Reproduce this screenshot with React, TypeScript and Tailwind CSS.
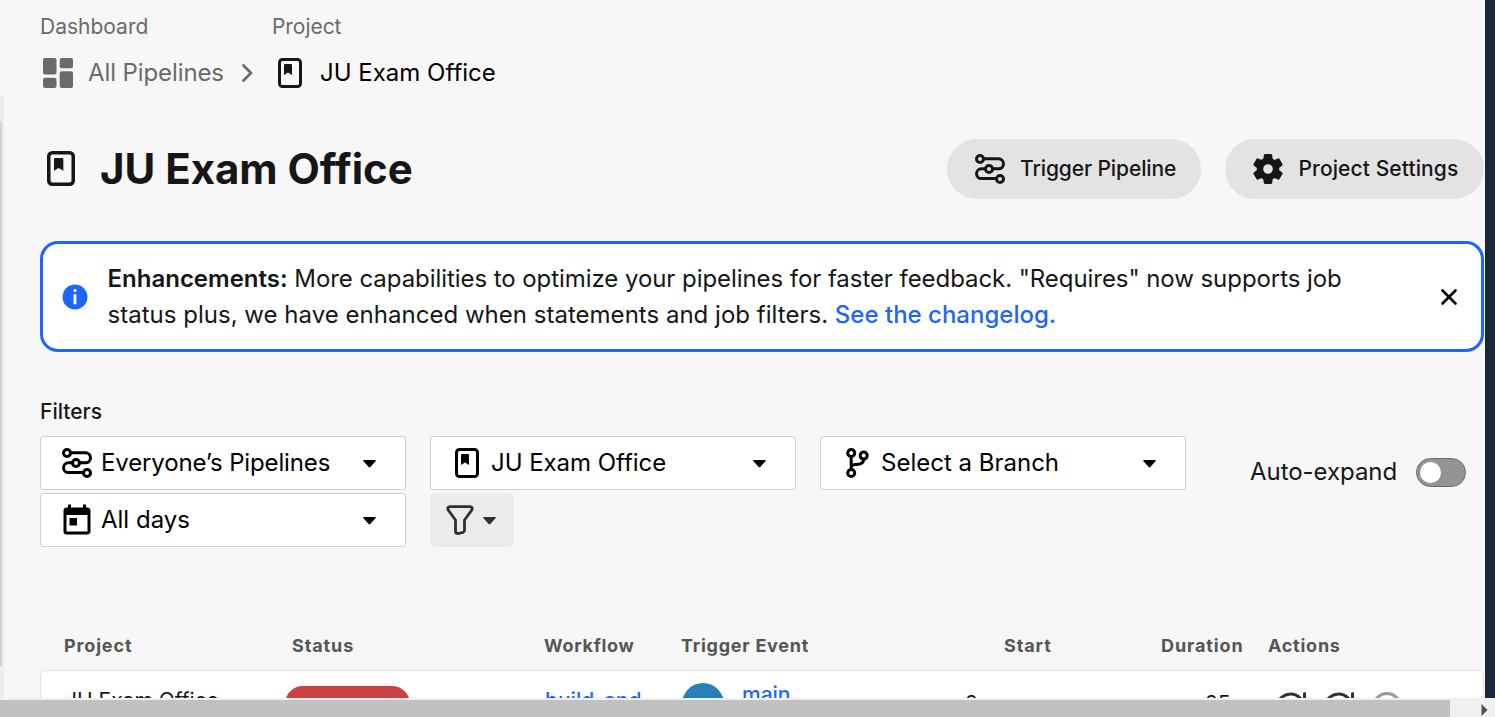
import type { ReactNode } from "react";
import { MdToday } from "react-icons/md";

function PipelineIcon() {
  return (
    <svg width="30" height="30" viewBox="0 0 30 30" fill="none" stroke="currentColor" strokeWidth="3" className="block shrink-0">
      <circle cx="5" cy="5" r="3.5" />
      <circle cx="14" cy="15" r="3.5" />
      <circle cx="25" cy="25" r="3.5" />
      <path d="M8.500 4.800H23.500a5 5 0 0 1 0 10H17.500" />
      <path d="M10.500 14.800H6.400a4.900 4.900 0 0 0 0 9.800H21.500" />
    </svg>
  );
}

const TEETH = [0, 60, 120, 180, 240, 300];

function GearIcon() {
  return (
    <svg width="30" height="30" viewBox="0 0 30 30" fill="currentColor" className="block shrink-0">
      <circle cx="15" cy="15" r="8" fill="none" stroke="currentColor" strokeWidth="6.400" />
      {TEETH.map((angle) => (
        <path key={angle} d="M10 7 10.900 1Q11.100 0 12.100 0H17.900Q18.900 0 19.100 1L20 7Z" transform={`rotate(${angle} 15 15)`} />
      ))}
    </svg>
  );
}

function ProjectIcon({ large = false }: { large?: boolean }) {
  return (
    <svg width={large ? 28 : 24} height={large ? 35 : 30} viewBox="0 0 24 30" fill="none" className="block shrink-0">
      <rect x="1.5" y="1.5" width="21" height="27" rx="3" stroke="currentColor" strokeWidth="3" />
      <path d="M7 6H13a1 1 0 0 1 1 1V17L10 14.6 6 17V7a1 1 0 0 1 1-1Z" fill="currentColor" />
    </svg>
  );
}

function DashboardIcon() {
  return (
    <svg width="30" height="30" viewBox="0 0 30 30" fill="currentColor" className="block shrink-0">
      <rect width="13.5" height="16.5" rx="2" />
      <rect y="19.8" width="13.5" height="10.2" rx="2" />
      <rect x="16.7" width="13.3" height="10.2" rx="2" />
      <rect x="16.7" y="13.2" width="13.3" height="16.8" rx="2" />
    </svg>
  );
}

function BranchIcon() {
  return (
    <svg width="23" height="30" viewBox="0 0 23 30" fill="none" stroke="currentColor" strokeWidth="3" className="block shrink-0">
      <circle cx="5.2" cy="5" r="3.5" />
      <circle cx="17.7" cy="7.6" r="3.5" />
      <circle cx="5.2" cy="25" r="3.5" />
      <path d="M5.2 8.6V21.4M17.7 11.2c0 4-4 5.2-7.500 5.200-2.500 0-4.500.8-5 2.500" />
    </svg>
  );
}

function Caret() {
  return (
    <svg width="13" height="8" viewBox="0 0 13 8" fill="currentColor" className="block shrink-0">
      <path d="M1 0H12Q13.300 .2 12.500 1.200L7.300 7Q6.500 7.800 5.700 7L.500 1.200Q-.300 .2 1 0Z" />
    </svg>
  );
}

function RerunIcon({ muted = false }: { muted?: boolean }) {
  return (
    <svg width="30" height="30" viewBox="0 0 30 30" fill="none" stroke="currentColor" strokeWidth="3" className="block shrink-0">
      {muted ? (
        <circle cx="15" cy="15" r="13.500" />
      ) : (
        <path strokeLinecap="round" d="M24.500 6.500A13.500 13.500 0 1 0 28 15M28.500 1.500V9H20" />
      )}
    </svg>
  );
}

function Select({ icon, children }: { icon: ReactNode; children: ReactNode }) {
  return (
    <button className="flex h-[54px] w-[366px] items-center rounded-[3px] border border-[#d0d0d0] bg-white pl-[18px] pr-[29.5px] text-left text-black">
      <span className="flex w-[36px] justify-center">{icon}</span>
      <span className="ml-[6px] flex-1 text-[24px] leading-[36px]">{children}</span>
      <span className="pt-[2px]"><Caret /></span>
    </button>
  );
}

export default function App() {
  return (
    <div className="flex h-[717px] w-[1495px] flex-col overflow-hidden bg-[#f7f7f7] font-['Inter',sans-serif] text-[#161616]">
      <div className="flex h-[698px] overflow-hidden">
        <div className="w-[4px] shrink-0 pt-[96px]">
          <div className="h-full bg-[#ededed] pt-[25px]">
            <div className="h-[545px] w-[2px] bg-[#d3d3d3]" />
          </div>
        </div>

        <main className="w-[1481px] shrink-0 pl-[36px]">
          <nav className="flex h-[139px] pt-[12px] text-[#6a6a6a]">
            <div className="w-[232px]">
              <div className="text-[21px] leading-[30px]">Dashboard</div>
              <div className="mt-[13px] flex h-[36px] items-center pl-[3px]">
                <DashboardIcon />
                <span className="ml-[15px] w-[154px] text-[24px] leading-[36px] tracking-[-0.1px]">All Pipelines</span>
                <svg width="11" height="18" viewBox="0 0 11 18" fill="none" stroke="currentColor" strokeWidth="2.800" strokeLinecap="round" strokeLinejoin="round">
                  <path d="M1.500 1.500 9 9 1.500 16.500" />
                </svg>
              </div>
            </div>
            <div>
              <div className="text-[21px] leading-[30px] tracking-[-0.05px]">Project</div>
              <div className="mt-[13px] flex h-[36px] items-center pl-[6px] text-[#161616]">
                <ProjectIcon />
                <span className="ml-[18px] text-[24px] leading-[36px] text-black">JU Exam Office</span>
              </div>
            </div>
          </nav>

          <header className="flex h-[60px] w-[1444px] items-center">
            <div className="pb-px pl-[7px]"><ProjectIcon large /></div>
            <h1 className="ml-[25px] flex-1 text-[42px] font-bold leading-[48px] tracking-[-0.03px]">JU Exam Office</h1>
            <button className="flex h-[60px] w-[254px] items-center rounded-full bg-[#e3e3e3] pl-[28px] text-[21px] font-medium tracking-[-0.1px]">
              <PipelineIcon />
              <span className="ml-[15px]">Trigger Pipeline</span>
            </button>
            <button className="ml-[24px] flex h-[60px] w-[259px] items-center rounded-full bg-[#e3e3e3] pl-[28px] text-[21px] font-medium tracking-[0.1px]">
              <GearIcon />
              <span className="ml-[15.5px]">Project Settings</span>
            </button>
          </header>

          <section className="mt-[42px] flex h-[111px] w-[1444px] items-center rounded-[18px] border-[3px] border-[#1c66fb] bg-white pl-[19px]">
            <svg width="26" height="26" viewBox="0 0 26 26" className="shrink-0">
              <circle cx="13" cy="13" r="12.500" fill="#1c66fb" />
              <circle cx="13" cy="6.500" r="1.500" fill="white" />
              <rect x="11.600" y="10" width="2.800" height="10.500" rx="1.300" fill="white" />
            </svg>
            <p className="ml-[19.5px] w-[1332.5px] text-[24px] leading-[36px]">
              <span className="tracking-[-0.062px]">
                <b className="font-semibold tracking-normal">Enhancements:</b> More capabilities to optimize your pipelines for faster feedback. "Requires" now supports job
              </span>
              <br />
              <span className="tracking-[0.02px]">status plus, we have enhanced when statements and job filters. </span>
              <a className="font-medium text-[#1c66fb]">See the changelog.</a>
            </p>
            <svg width="18" height="18" viewBox="0 0 18 18" fill="none" stroke="black" strokeWidth="2.600" strokeLinecap="round">
              <path d="M2.500 2.500 15.500 15.500M15.500 2.500 2.500 15.500" />
            </svg>
          </section>

          <section className="mt-[45px] h-[223px]">
            <h2 className="text-[21px] font-medium leading-[30px]">Filters</h2>
            <div className="mt-[9px] flex">
              <div className="flex w-[1210px] flex-wrap gap-x-[24px] gap-y-[3px]">
                <Select icon={<PipelineIcon />}><span className="tracking-[-0.14px]">Everyone’s Pipelines</span></Select>
                <Select icon={<ProjectIcon />}><span className="tracking-[-0.05px]">JU Exam Office</span></Select>
                <Select icon={<BranchIcon />}>Select a Branch</Select>
                <Select icon={<span className="pt-px"><MdToday size={36} /></span>}>All days</Select>
                <button className="flex h-[54px] w-[84px] items-center rounded-[6px] bg-[#ebebeb] pl-[16px] text-[#303030]">
                  <svg width="28" height="30" viewBox="0 0 28 30" fill="none" stroke="currentColor" strokeWidth="2.800" strokeLinejoin="round">
                    <path d="M4 1.700H24Q27.200 2 25.700 5.200L18.500 15V25.500Q18.400 26.800 17 27.400L12.500 28.500Q9.700 28.700 9.500 26.500V15L2.300 5.200Q.800 2 4 1.700Z" />
                  </svg>
                  <span className="ml-[9px] pt-[2px]"><Caret /></span>
                </button>
              </div>
              <label className="flex h-[72px] items-center text-[24px] tracking-[-0.05px]">
                <span className="w-[166px]">Auto-expand</span>
                <span className="flex h-[29px] w-[50px] items-center rounded-full border border-[#6b6b6b] bg-[#949494] pl-[3px]">
                  <span className="size-[21px] rounded-full bg-white" />
                </span>
              </label>
            </div>
          </section>

          <div className="mt-[11px] flex h-[39px] pl-[24px] text-[18px] font-bold leading-[30px] tracking-[0.75px] text-[#555]">
            <span className="w-[228px] tracking-[0.85px]">Project</span>
            <span className="w-[252px] tracking-[0.9px]">Status</span>
            <span className="w-[137px] tracking-[0.7px]">Workflow</span>
            <span className="w-[323px]">Trigger Event</span>
            <span className="w-[157px] tracking-[0.9px]">Start</span>
            <span className="w-[107px] tracking-[0.9px]">Duration</span>
            <span>Actions</span>
          </div>
          <div className="flex h-[90px] w-[1444px] items-start rounded-[6px] border border-[#e0e0e0] bg-white text-[21px] leading-[30px]">
            <span className="w-[244px] shrink-0 pl-[24px] pt-[15px]">JU Exam Office</span>
            <span className="mt-[15px] h-[36px] w-[125px] shrink-0 rounded-[18px] bg-[#c94141]" />
            <span className="w-[272px] shrink-0 pl-[135px] pt-[15px] font-medium text-[#1c66fb]">build-and</span>
            <span className="mt-[12px] size-[42px] shrink-0 rounded-full bg-[#2980b9]" />
            <span className="w-[241px] shrink-0 pl-[18px] pt-[9px] font-medium text-[#1c66fb]">main</span>
            <span className="w-[240px] shrink-0 pt-[18px]">2</span>
            <span className="w-[71px] shrink-0 pt-[18px]">25</span>
            <span className="flex gap-[18px] pt-[21px] text-[#303030]">
              <RerunIcon />
              <RerunIcon />
              <span className="text-[#9a9a9a]"><RerunIcon muted /></span>
            </span>
          </div>
        </main>

        <div className="w-[10px] shrink-0 bg-[#1c2639]" />
      </div>

      <div className="flex h-[19px] items-start bg-[#f0f0f0] pt-[2px]">
        <div className="h-[17px] w-[1450px] bg-[#c1c1c1]" />
        <svg width="7" height="12" viewBox="0 0 7 12" className="ml-[31px] mt-[4px]">
          <path d="M.500 0 6.500 6 .500 12Z" fill="#505050" />
        </svg>
      </div>
    </div>
  );
}
